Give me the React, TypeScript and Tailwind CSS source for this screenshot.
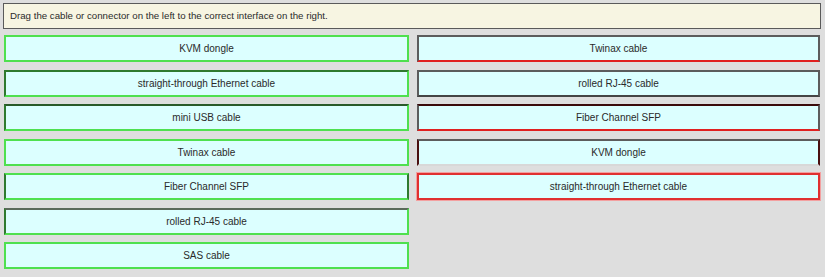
import React from "react";

type Box = { label: string; cls: string };

const left: Box[] = [
  { label: "KVM dongle", cls: "border-[#4fe04f]" },
  { label: "straight-through Ethernet cable", cls: "border-[#4fe04f] border-t-[#2f7a2f] border-l-[#2f7a2f]" },
  { label: "mini USB cable", cls: "border-[#4fe04f] border-t-[#2a5a2a] border-l-[#2f7a2f]" },
  { label: "Twinax cable", cls: "border-[#4fe04f]" },
  { label: "Fiber Channel SFP", cls: "border-[#4fe04f] border-r-[#2f7a2f] border-l-[#2f7a2f]" },
  { label: "rolled RJ-45 cable", cls: "border-[#4fe04f] border-t-[#5a6a5a] border-l-[#2f7a2f]" },
  { label: "SAS cable", cls: "border-[#4fe04f]" },
];

const right: Box[] = [
  { label: "Twinax cable", cls: "border-[#5c5c5c] border-b-[#e02020]" },
  { label: "rolled RJ-45 cable", cls: "border-[#5c5c5c] border-b-[#444]" },
  { label: "Fiber Channel SFP", cls: "border-[#5c5c5c] border-t-[#3a0a0a] border-b-[#e02020]" },
  { label: "KVM dongle", cls: "border-[#5c5c5c] border-l-[#4a1010] border-r-[#4a1010] border-b-[#d8d8d8]" },
  { label: "straight-through Ethernet cable", cls: "border-[#e03030] outline outline-1 outline-[#f3a0a0]" },
];

const Cell = ({ item, w }: { item: Box; w: string }) => (
  <div className={`border-2 ${item.cls}`}>
    <div className={`h-[23px] ${w} flex items-center justify-center bg-[#dcffff] text-[10px] text-[#2a2a2a]`}>
      {item.label}
    </div>
  </div>
);

export default function App() {
  return (
    <div
      className="w-[825px] h-[277px] bg-[#dedede] px-[3px] pt-[3px]"
      style={{ fontFamily: '"Liberation Sans", Arial, sans-serif' }}
    >
      <div className="h-[26px] w-[818px] border border-[#5a5a5a] bg-[#f7f5e2] flex items-center pl-[6px] text-[9.7px] text-[#2a2a2a]">
        Drag the cable or connector on the left to the correct interface on the right.
      </div>
      <div className="flex mt-[6px] ml-px">
        <div className="flex flex-col gap-[7.5px]">
          {left.map((b, i) => (
            <Cell key={i} item={b} w="w-[401px]" />
          ))}
        </div>
        <div className="flex flex-col gap-[7.5px] ml-[8px]">
          {right.map((b, i) => (
            <Cell key={i} item={b} w="w-[399px]" />
          ))}
        </div>
      </div>
    </div>
  );
}
